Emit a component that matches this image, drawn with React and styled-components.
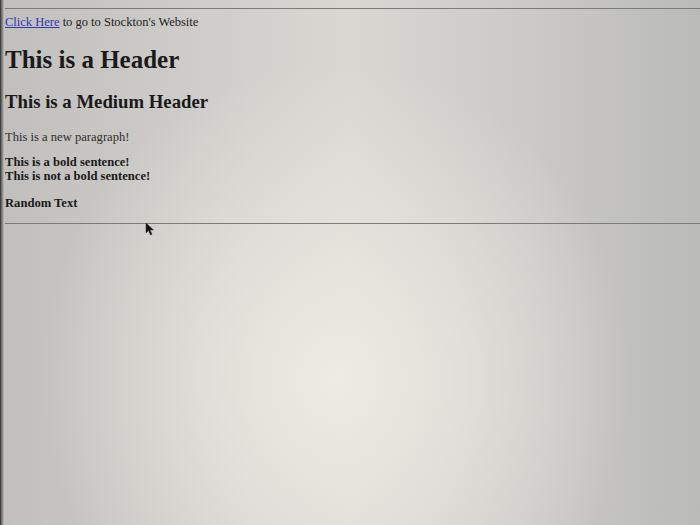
import React from "react";
import styled, { createGlobalStyle } from "styled-components";

const Global = createGlobalStyle`
  html, body { margin: 0; padding: 0; }
  body { font-family: "Liberation Serif", "Times New Roman", serif; color: #1c1c1c; }
`;

const Screen = styled.div`
  position: relative;
  width: 700px;
  height: 525px;
  overflow: hidden;
  box-sizing: border-box;
  padding: 8px 0 0 5px;
  background:
    linear-gradient(90deg, rgba(30,30,30,0.9) 0px, rgba(60,60,60,0.5) 2px, rgba(0,0,0,0) 4px),
    radial-gradient(ellipse 42% 60% at 48% 72%, rgba(238,236,228,0.95) 0%, rgba(238,236,228,0) 100%),
    linear-gradient(90deg, #c0bfbc 0%, #cfceca 30%, #d8d7d2 50%, #cbcac7 75%, #babab7 100%);
`;

const Rule = styled.div`
  height: 1px;
  margin-right: -5px;
  background: #7b7b79;
  margin-top: ${(p) => p.$top || 0}px;
`;

const LinkLine = styled.div`
  font-size: 12.5px;
  line-height: 14px;
  margin-top: 6px;
  color: #222;
`;

const Link = styled.a`
  color: #3434b8;
  text-decoration: underline;
`;

const Header = styled.h1`
  margin: 17px 0 0;
  font-size: 25px;
  line-height: 28px;
  font-weight: bold;
  color: #1a1a1a;
`;

const MediumHeader = styled.h2`
  margin: 17px 0 0;
  font-size: 18.75px;
  line-height: 21px;
  font-weight: bold;
  color: #1a1a1a;
`;

const Paragraph = styled.p`
  margin: ${(p) => p.$top}px 0 0;
  font-size: 12.6px;
  line-height: 14px;
  color: ${(p) => (p.$bold ? "#1a1a1a" : "#2e2e2e")};
  font-weight: ${(p) => (p.$bold ? "bold" : "normal")};
`;

const Cursor = styled.svg`
  position: absolute;
  left: 145px;
  top: 222px;
`;

export default function App() {
  return (
    <>
      <Global />
      <Screen>
        <Rule />
        <LinkLine>
          <Link href="#">Click Here</Link> to go to Stockton's Website
        </LinkLine>
        <Header>This is a Header</Header>
        <MediumHeader>This is a Medium Header</MediumHeader>
        <Paragraph $top={18}>This is a new paragraph!</Paragraph>
        <Paragraph $top={11} $bold>
          This is a bold sentence!
          <br />
          This is not a bold sentence!
        </Paragraph>
        <Paragraph $top={13} $bold>Random Text</Paragraph>
        <Rule $top={13} />
        <Cursor width="10" height="14" viewBox="0 0 10 14">
          <path d="M1 1 L1 11 L3.5 8.5 L5.5 13 L7 12.3 L5 8 L8.5 8 Z" fill="#111" stroke="#333" strokeWidth="0.5" />
        </Cursor>
      </Screen>
    </>
  );
}
